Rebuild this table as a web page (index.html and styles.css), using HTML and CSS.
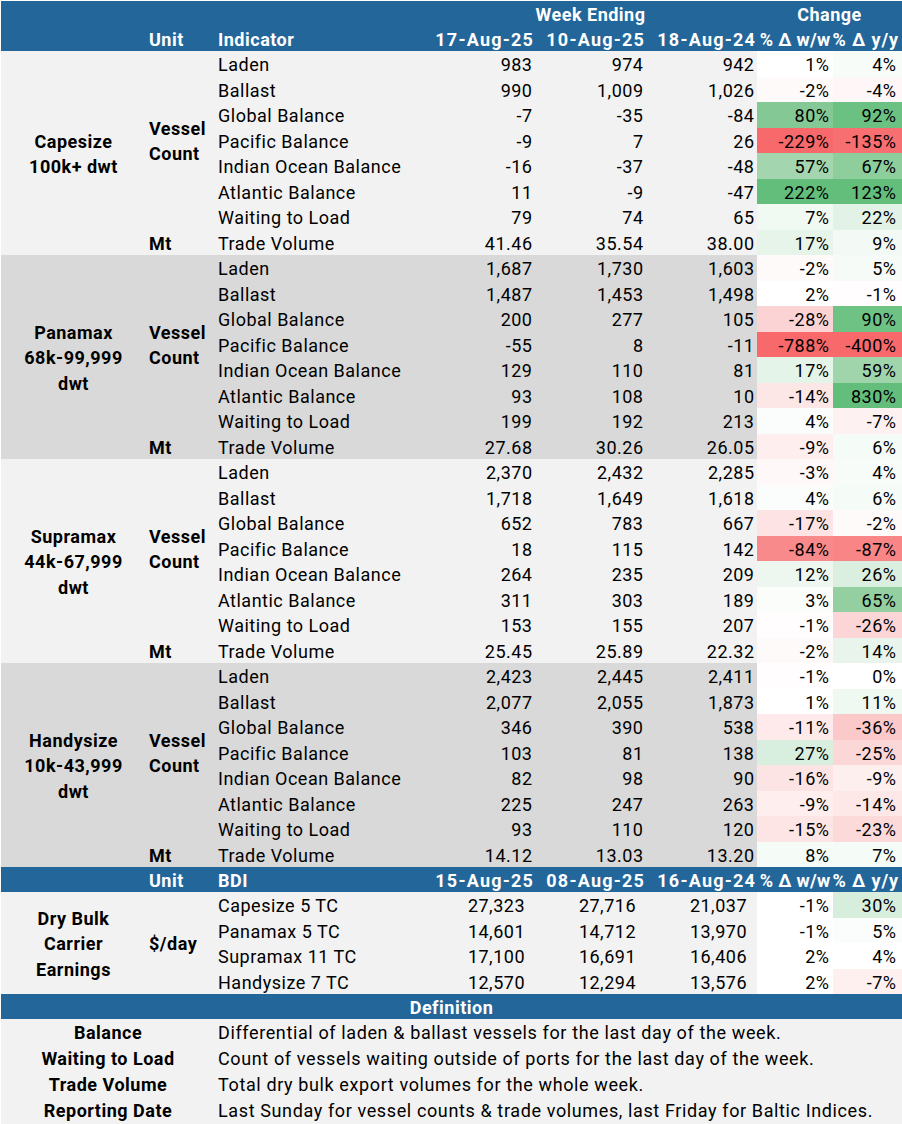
FILE: index.html
```html
<!DOCTYPE html>
<html lang="en">
<head>
<meta charset="utf-8">
<title>Dry Bulk Weekly Indicators</title>
<link rel="stylesheet" href="styles.css">
</head>
<body>
<div class="sheet">
  <div class="hdr">
    <div class="c span-wk">Week Ending</div>
    <div class="c span-chg">Change</div>
  </div>
  <div class="hdr">
    <div class="c"></div>
    <div class="c">Unit</div>
    <div class="c">Indicator</div>
    <div class="c n date">17-Aug-25</div>
    <div class="c n date">10-Aug-25</div>
    <div class="c n date">18-Aug-24</div>
    <div class="c p">% Δ w/w</div>
    <div class="c p y">% Δ y/y</div>
  </div>

  <section class="sec light">
    <div class="cat">Capesize<br>100k+ dwt</div>
    <div class="unit">Vessel<br>Count</div>
    <div class="c">Laden</div><div class="c n">983</div><div class="c n">974</div><div class="c n">942</div><div class="c p" style="background:#ffffff">1%</div><div class="c p y" style="background:#f8fcf9">4%</div>
    <div class="c">Ballast</div><div class="c n">990</div><div class="c n">1,009</div><div class="c n">1,026</div><div class="c p" style="background:#fffafa">-2%</div><div class="c p y" style="background:#fff7f7">-4%</div>
    <div class="c">Global Balance</div><div class="c n">-7</div><div class="c n">-35</div><div class="c n">-84</div><div class="c p" style="background:#84c995">80%</div><div class="c p y" style="background:#6bc182">92%</div>
    <div class="c">Pacific Balance</div><div class="c n">-9</div><div class="c n">7</div><div class="c n">26</div><div class="c p" style="background:#f8696b">-229%</div><div class="c p y" style="background:#f86f71">-135%</div>
    <div class="c">Indian Ocean Balance</div><div class="c n">-16</div><div class="c n">-37</div><div class="c n">-48</div><div class="c p" style="background:#a3d6ae">57%</div><div class="c p y" style="background:#8ecd9c">67%</div>
    <div class="c">Atlantic Balance</div><div class="c n">11</div><div class="c n">-9</div><div class="c n">-47</div><div class="c p" style="background:#63be7b">222%</div><div class="c p y" style="background:#63be7b">123%</div>
    <div class="c">Waiting to Load</div><div class="c n">79</div><div class="c n">74</div><div class="c n">65</div><div class="c p" style="background:#f1f9f3">7%</div><div class="c p y" style="background:#e2f2e6">22%</div>
    <div class="unit one">Mt</div>
    <div class="c">Trade Volume</div><div class="c n">41.46</div><div class="c n">35.54</div><div class="c n">38.00</div><div class="c p" style="background:#e6f4e9">17%</div><div class="c p y" style="background:#f3faf5">9%</div>
  </section>

  <section class="sec grey">
    <div class="cat">Panamax<br>68k-99,999<br>dwt</div>
    <div class="unit">Vessel<br>Count</div>
    <div class="c">Laden</div><div class="c n">1,687</div><div class="c n">1,730</div><div class="c n">1,603</div><div class="c p" style="background:#fffafa">-2%</div><div class="c p y" style="background:#f6fbf7">5%</div>
    <div class="c">Ballast</div><div class="c n">1,487</div><div class="c n">1,453</div><div class="c n">1,498</div><div class="c p" style="background:#ffffff">2%</div><div class="c p y" style="background:#fffdfd">-1%</div>
    <div class="c">Global Balance</div><div class="c n">200</div><div class="c n">277</div><div class="c n">105</div><div class="c p" style="background:#fcd3d4">-28%</div><div class="c p y" style="background:#6ec284">90%</div>
    <div class="c">Pacific Balance</div><div class="c n">-55</div><div class="c n">8</div><div class="c n">-11</div><div class="c p" style="background:#f8696b">-788%</div><div class="c p y" style="background:#f8696b">-400%</div>
    <div class="c">Indian Ocean Balance</div><div class="c n">129</div><div class="c n">110</div><div class="c n">81</div><div class="c p" style="background:#e5f4e8">17%</div><div class="c p y" style="background:#a0d5ac">59%</div>
    <div class="c">Atlantic Balance</div><div class="c n">93</div><div class="c n">108</div><div class="c n">10</div><div class="c p" style="background:#fde6e6">-14%</div><div class="c p y" style="background:#63be7b">830%</div>
    <div class="c">Waiting to Load</div><div class="c n">199</div><div class="c n">192</div><div class="c n">213</div><div class="c p" style="background:#fafdfb">4%</div><div class="c p y" style="background:#fef1f1">-7%</div>
    <div class="unit one">Mt</div>
    <div class="c">Trade Volume</div><div class="c n">27.68</div><div class="c n">30.26</div><div class="c n">26.05</div><div class="c p" style="background:#feeeee">-9%</div><div class="c p y" style="background:#f5fbf6">6%</div>
  </section>

  <section class="sec light">
    <div class="cat">Supramax<br>44k-67,999<br>dwt</div>
    <div class="unit">Vessel<br>Count</div>
    <div class="c">Laden</div><div class="c n">2,370</div><div class="c n">2,432</div><div class="c n">2,285</div><div class="c p" style="background:#fef8f8">-3%</div><div class="c p y" style="background:#f8fcf9">4%</div>
    <div class="c">Ballast</div><div class="c n">1,718</div><div class="c n">1,649</div><div class="c n">1,618</div><div class="c p" style="background:#fafdfb">4%</div><div class="c p y" style="background:#f5fbf6">6%</div>
    <div class="c">Global Balance</div><div class="c n">652</div><div class="c n">783</div><div class="c n">667</div><div class="c p" style="background:#fde3e3">-17%</div><div class="c p y" style="background:#fffafa">-2%</div>
    <div class="c">Pacific Balance</div><div class="c n">18</div><div class="c n">115</div><div class="c n">142</div><div class="c p" style="background:#f98a8c">-84%</div><div class="c p y" style="background:#f98587">-87%</div>
    <div class="c">Indian Ocean Balance</div><div class="c n">264</div><div class="c n">235</div><div class="c n">209</div><div class="c p" style="background:#edf7ef">12%</div><div class="c p y" style="background:#daefdf">26%</div>
    <div class="c">Atlantic Balance</div><div class="c n">311</div><div class="c n">303</div><div class="c n">189</div><div class="c p" style="background:#fbfdfb">3%</div><div class="c p y" style="background:#93cfa0">65%</div>
    <div class="c">Waiting to Load</div><div class="c n">153</div><div class="c n">155</div><div class="c n">207</div><div class="c p" style="background:#fffdfd">-1%</div><div class="c p y" style="background:#fcd6d7">-26%</div>
    <div class="unit one">Mt</div>
    <div class="c">Trade Volume</div><div class="c n">25.45</div><div class="c n">25.89</div><div class="c n">22.32</div><div class="c p" style="background:#fffafa">-2%</div><div class="c p y" style="background:#e9f5ec">14%</div>
  </section>

  <section class="sec grey">
    <div class="cat">Handysize<br>10k-43,999<br>dwt</div>
    <div class="unit">Vessel<br>Count</div>
    <div class="c">Laden</div><div class="c n">2,423</div><div class="c n">2,445</div><div class="c n">2,411</div><div class="c p" style="background:#fffdfd">-1%</div><div class="c p y" style="background:#ffffff">0%</div>
    <div class="c">Ballast</div><div class="c n">2,077</div><div class="c n">2,055</div><div class="c n">1,873</div><div class="c p" style="background:#ffffff">1%</div><div class="c p y" style="background:#eff8f1">11%</div>
    <div class="c">Global Balance</div><div class="c n">346</div><div class="c n">390</div><div class="c n">538</div><div class="c p" style="background:#feeaea">-11%</div><div class="c p y" style="background:#fcc9ca">-36%</div>
    <div class="c">Pacific Balance</div><div class="c n">103</div><div class="c n">81</div><div class="c n">138</div><div class="c p" style="background:#d8eede">27%</div><div class="c p y" style="background:#fcd7d8">-25%</div>
    <div class="c">Indian Ocean Balance</div><div class="c n">82</div><div class="c n">98</div><div class="c n">90</div><div class="c p" style="background:#fde4e4">-16%</div><div class="c p y" style="background:#feefef">-9%</div>
    <div class="c">Atlantic Balance</div><div class="c n">225</div><div class="c n">247</div><div class="c n">263</div><div class="c p" style="background:#feeeee">-9%</div><div class="c p y" style="background:#fde7e7">-14%</div>
    <div class="c">Waiting to Load</div><div class="c n">93</div><div class="c n">110</div><div class="c n">120</div><div class="c p" style="background:#fde5e5">-15%</div><div class="c p y" style="background:#fcdada">-23%</div>
    <div class="unit one">Mt</div>
    <div class="c">Trade Volume</div><div class="c n">14.12</div><div class="c n">13.03</div><div class="c n">13.20</div><div class="c p" style="background:#f5fbf6">8%</div><div class="c p y" style="background:#f5fbf6">7%</div>
  </section>

  <div class="hdr">
    <div class="c"></div>
    <div class="c">Unit</div>
    <div class="c">BDI</div>
    <div class="c n date">15-Aug-25</div>
    <div class="c n date">08-Aug-25</div>
    <div class="c n date">16-Aug-24</div>
    <div class="c p">% Δ w/w</div>
    <div class="c p y">% Δ y/y</div>
  </div>

  <section class="sec light bdi">
    <div class="cat">Dry Bulk<br>Carrier<br>Earnings</div>
    <div class="unit">$/day</div>
    <div class="c">Capesize 5 TC</div><div class="c n">27,323</div><div class="c n">27,716</div><div class="c n">21,037</div><div class="c p" style="background:#ffffff">-1%</div><div class="c p y" style="background:#d8eedd">30%</div>
    <div class="c">Panamax 5 TC</div><div class="c n">14,601</div><div class="c n">14,712</div><div class="c n">13,970</div><div class="c p" style="background:#ffffff">-1%</div><div class="c p y" style="background:#fafdfb">5%</div>
    <div class="c">Supramax 11 TC</div><div class="c n">17,100</div><div class="c n">16,691</div><div class="c n">16,406</div><div class="c p" style="background:#ffffff">2%</div><div class="c p y" style="background:#ffffff">4%</div>
    <div class="c">Handysize 7 TC</div><div class="c n">12,570</div><div class="c n">12,294</div><div class="c n">13,576</div><div class="c p" style="background:#ffffff">2%</div><div class="c p y" style="background:#fff0f0">-7%</div>
  </section>

  <div class="hdr def-hdr">
    <div class="c">Definition</div>
  </div>

  <section class="defs">
    <div class="term">Balance</div><div class="desc">Differential of laden &amp; ballast vessels for the last day of the week.</div>
    <div class="term">Waiting to Load</div><div class="desc">Count of vessels waiting outside of ports for the last day of the week.</div>
    <div class="term">Trade Volume</div><div class="desc">Total dry bulk export volumes for the whole week.</div>
    <div class="term">Reporting Date</div><div class="desc">Last Sunday for vessel counts &amp; trade volumes, last Friday for Baltic Indices.</div>
  </section>
</div>
</body>
</html>
```

FILE: styles.css
```css
:root {
  --cols: 145px 69px 209px 111px 111px 111px 76px 69px;
  --blue: #23669a;
  --light: #f2f2f2;
  --grey: #d9d9d9;
}

html, body {
  margin: 0;
  padding: 0;
  background: #ffffff;
}

body {
  font-family: Roboto, "Liberation Sans", Arial, sans-serif;
  font-size: 18px;
  color: #000000;
  letter-spacing: 0.5px;
}

.sheet {
  width: 901px;
  margin: 1px 0 0 1px;
}

.hdr,
.sec {
  display: grid;
  grid-template-columns: var(--cols);
}

.hdr {
  background: var(--blue);
  color: #ffffff;
  font-weight: 700;
  grid-auto-rows: 25px;
}

.sec {
  grid-auto-rows: 25.5px;
}

.light { background: var(--light); }
.grey { background: var(--grey); }

.c {
  display: flex;
  align-items: center;
  white-space: nowrap;
  padding: 2px 3px 0 3px;
  line-height: 23px;
  overflow: visible;
}

.n {
  justify-content: flex-end;
  padding-right: 2.5px;
}

.p {
  justify-content: flex-end;
  padding-right: 3.5px;
}

.p.y {
  padding-right: 5.5px;
}

.hdr .p {
  letter-spacing: 0.3px;
  padding-right: 2.5px;
}

.hdr .p.y {
  letter-spacing: 0.9px;
  padding-right: 3px;
}

.date {
  letter-spacing: 1.2px;
  padding-right: 1px;
}

.span-wk {
  grid-column: 4 / 7;
  justify-content: center;
}

.span-chg {
  grid-column: 7 / 9;
  justify-content: center;
}

.cat {
  grid-row: span 8;
  grid-column: 1;
  display: flex;
  align-items: center;
  justify-content: center;
  text-align: center;
  font-weight: 700;
  line-height: 25.5px;
  padding-top: 2px;
}

.unit {
  grid-row: span 7;
  grid-column: 2;
  display: flex;
  align-items: center;
  padding: 2px 0 0 3px;
  font-weight: 700;
  line-height: 25.5px;
}

.unit.one {
  grid-row: span 1;
}

.bdi .cat,
.bdi .unit {
  grid-row: span 4;
}

.bdi .n {
  padding-right: 10px;
}

.def-hdr {
  grid-template-columns: 1fr;
}

.def-hdr .c {
  justify-content: center;
}

.defs {
  display: grid;
  grid-template-columns: 214px 687px;
  grid-auto-rows: 26.2px;
  background: var(--light);
}

.term {
  display: flex;
  align-items: center;
  justify-content: center;
  font-weight: 700;
  white-space: nowrap;
}

.desc {
  display: flex;
  align-items: center;
  padding-left: 3px;
  white-space: nowrap;
  letter-spacing: 0.62px;
}
```
